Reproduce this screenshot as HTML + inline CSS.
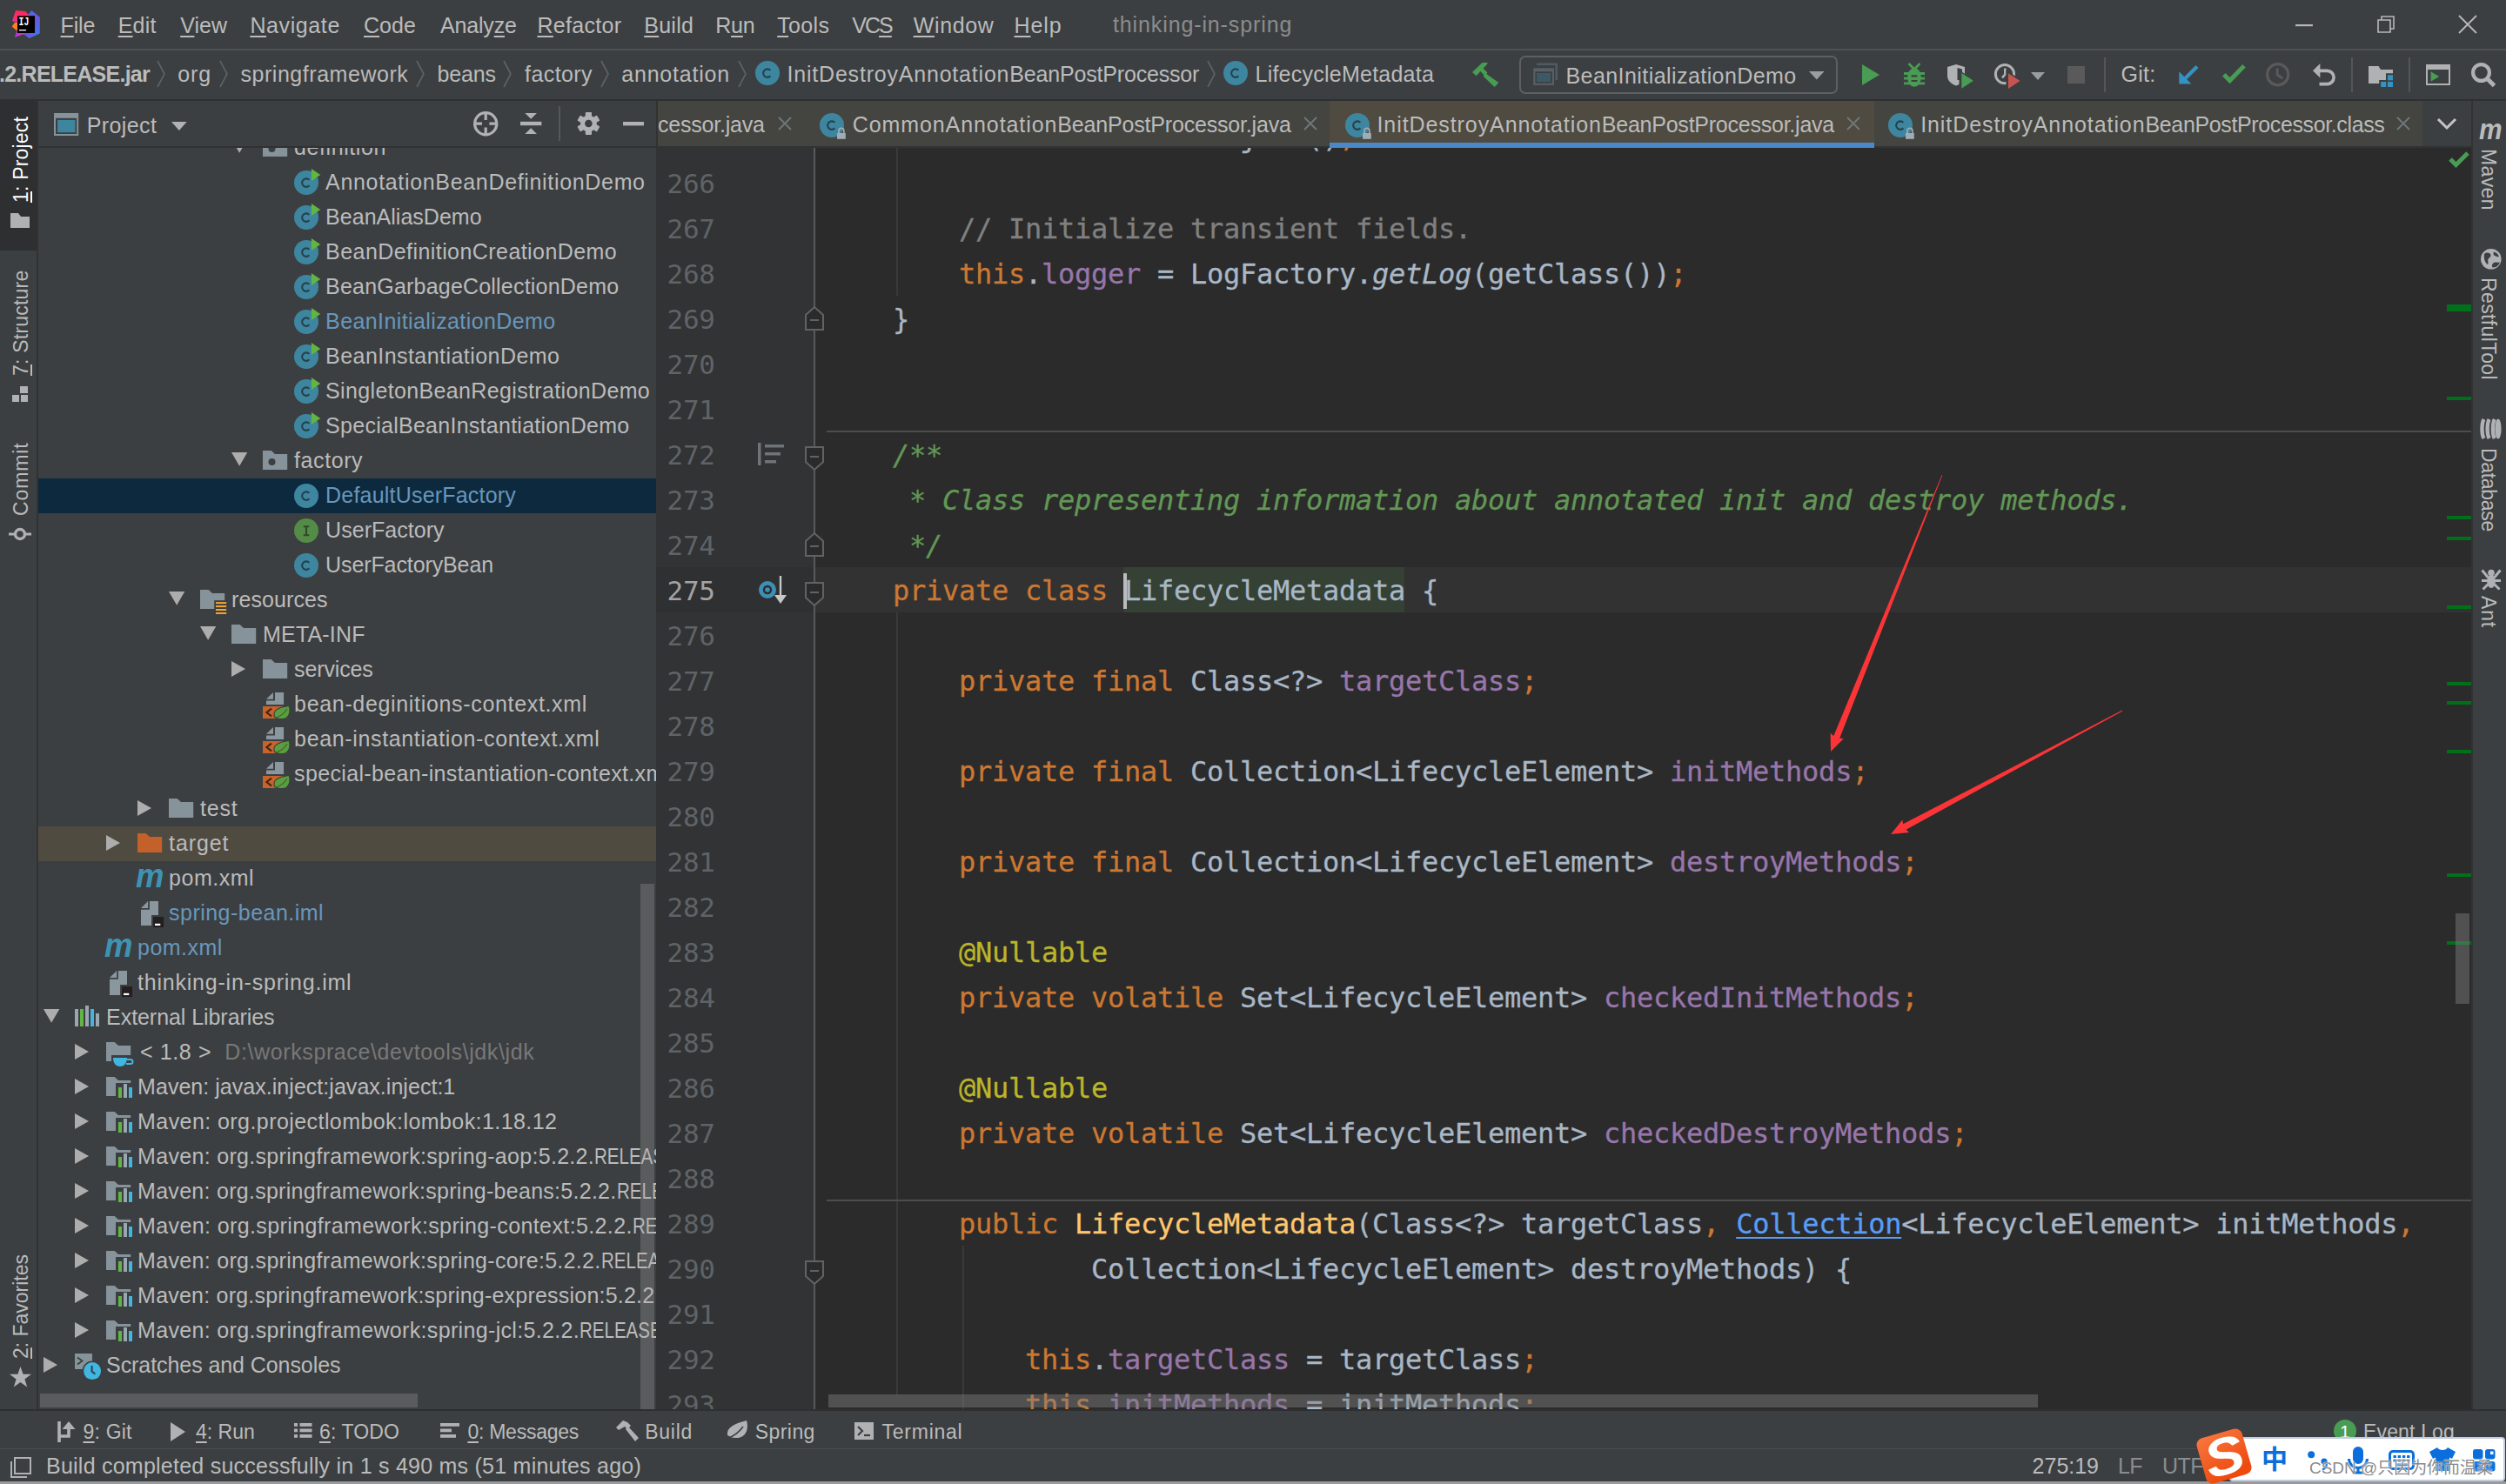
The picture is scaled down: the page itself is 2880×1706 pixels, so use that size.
<!DOCTYPE html>
<html lang="en"><head><meta charset="utf-8"><title>thinking-in-spring</title>
<style>
*{box-sizing:border-box;margin:0;padding:0}
html,body{width:2880px;height:1706px;overflow:hidden;background:#3c3f41}
body{position:relative;font-family:"Liberation Sans","Noto Sans CJK SC",sans-serif;color:#bbbbbb;font-size:25px}
.abs{position:absolute}
.t{position:absolute;white-space:nowrap;line-height:40px;height:40px}
u{text-decoration:underline;text-underline-offset:3px;text-decoration-thickness:2px}
.mono{font-family:"DejaVu Sans Mono","Liberation Mono",monospace}
svg{position:absolute;overflow:visible}
/* tree */
.row{position:absolute;left:44px;width:710px;height:40px}

.caps{display:inline-block;transform:scaleX(0.82);transform-origin:0 50%;letter-spacing:0}
.blue{color:#6897bb}
.gray{color:#787878}
/* code */
.ln{position:absolute;left:756px;width:2084px;height:52px}
.ln .num{position:absolute;left:10.5px;top:1px;line-height:52px;font-size:31px;letter-spacing:-0.26px;color:#606366;font-family:"DejaVu Sans Mono","Liberation Mono",monospace}
.ln .code{position:absolute;left:194px;top:1px;-webkit-text-stroke:0.3px;line-height:52px;font-size:32px;letter-spacing:-0.264px;color:#a9b7c6;white-space:pre;font-family:"DejaVu Sans Mono","Liberation Mono",monospace}
.k{color:#cc7832}.f{color:#9876aa}.a{color:#bbb529}.c{color:#808080}.d{color:#629755;font-style:italic}.m{color:#ffc66d}.i{font-style:italic}
.lnk{color:#589df6;text-decoration:underline;text-underline-offset:4px;text-decoration-thickness:2px}
.vt{position:absolute;white-space:nowrap;font-size:23px;line-height:30px;height:30px;transform-origin:0 0}

#m_File{letter-spacing:-0.148px}
#m_Edit{letter-spacing:0.23px}
#m_View{letter-spacing:0.016px}
#m_Navigate{letter-spacing:0.603px}
#m_Code{letter-spacing:0.055px}
#m_Analyze{letter-spacing:-0.179px}
#m_Refactor{letter-spacing:0.3px}
#m_Build{letter-spacing:0.281px}
#m_Run{letter-spacing:-0.154px}
#m_Tools{letter-spacing:0.347px}
#m_VCS{letter-spacing:-1.936px}
#m_Window{letter-spacing:0.662px}
#m_Help{letter-spacing:0.891px}
#title{letter-spacing:0.879px}
#c0{letter-spacing:-0.743px}
#c1{letter-spacing:0.957px}
#c2{letter-spacing:0.535px}
#c3{letter-spacing:-0.123px}
#c4{letter-spacing:0.411px}
#c5{letter-spacing:0.782px}
#c6a{letter-spacing:0.799px}
#c7{letter-spacing:0.24px}
#runcfg{letter-spacing:0.432px}
#gitlbl{letter-spacing:0.326px}
#projlbl{letter-spacing:0.384px}
#tab1{letter-spacing:-0.215px}
#tab2a{letter-spacing:0.915px}
#tab3a{letter-spacing:0.918px}
#tab4a{letter-spacing:0.918px}
#b1{letter-spacing:0.205px}
#b2{letter-spacing:0.003px}
#b3{letter-spacing:0.116px}
#b4{letter-spacing:-0.254px}
#b5{letter-spacing:0.709px}
#b6{letter-spacing:0.42px}
#b7{letter-spacing:0.76px}
#b8{letter-spacing:0.156px}
#s1{letter-spacing:0.241px}
#s2{letter-spacing:-0.01px}
#s3{letter-spacing:-0.594px}
#r1{letter-spacing:0.67px}
#r2{letter-spacing:0.019px}
#r3{letter-spacing:0.435px}
#r4{letter-spacing:0.202px}
#r5{letter-spacing:0.396px}
#r6{letter-spacing:0.448px}
#r7{letter-spacing:0.354px}
#r8{letter-spacing:0.268px}
#r9{letter-spacing:0.568px}
#r10{letter-spacing:0.197px}
#r11{letter-spacing:0.033px}
#r12{letter-spacing:-0.108px}
#r13{letter-spacing:0.071px}
#r14{letter-spacing:0.165px}
#r15{letter-spacing:-0.135px}
#r16{letter-spacing:0.667px}
#r17{letter-spacing:0.643px}
#r19{letter-spacing:0.752px}
#r20{letter-spacing:0.895px}
#r21{letter-spacing:0.52px}
#r22{letter-spacing:0.466px}
#r23{letter-spacing:0.463px}
#r24{letter-spacing:0.775px}
#r25{letter-spacing:-0.062px}
#r26{letter-spacing:0.613px}
#r27{letter-spacing:0.034px}
#r28{letter-spacing:0.43px}
#r35{letter-spacing:-0.076px}
#wm{letter-spacing:-0.031px}
#r18{letter-spacing:0.346px}
#r29{letter-spacing:0.31px}
#r30{letter-spacing:0.275px}
#r31{letter-spacing:0.385px}
#r32{letter-spacing:0.316px}
#r33{letter-spacing:0.213px}
#r34{letter-spacing:0.335px}
#vt1{letter-spacing:0.183px}
#vt2{letter-spacing:0.216px}
#vt3{letter-spacing:0.878px}
#vt4{letter-spacing:-0.014px}
#vr1{letter-spacing:0.391px}
#vr2{letter-spacing:0.384px}
#vr3{letter-spacing:-0.309px}
#vr4{letter-spacing:0.823px}
#c6b{letter-spacing:-0.18px}
#tab2b{letter-spacing:-0.177px}
#tab3b{letter-spacing:-0.236px}
#tab4b{letter-spacing:-0.369px}
#r0{letter-spacing:0.568px}
#s4{letter-spacing:-0.594px}
</style></head>
<body>
<div class="abs" style="left:0;top:116px;width:42px;height:1504px;background:#3c3f41"></div>
<div class="abs" style="left:0;top:116px;width:42px;height:172px;background:#2d2f30"></div>
<div class="abs" style="left:42px;top:116px;width:2px;height:1504px;background:#323232"></div>
<div class="vt" id="vt1" style="left:9px;top:233px;transform:rotate(-90deg);color:#ffffff"><u>1</u>: Project</div>
<svg style="left:12px;top:245px" width="22" height="17" viewBox="0 0 22 17"><path d="M0 0H9L12 4H22V17H0Z" fill="#afb1b3"/></svg>
<div class="vt" id="vt2" style="left:9px;top:432px;transform:rotate(-90deg);color:#bbbbbb"><u>7</u>: Structure</div>
<svg style="left:14px;top:444px" width="18" height="18" viewBox="0 0 18 18"><rect x="9" y="0" width="9" height="8" fill="#afb1b3"/><rect x="0" y="10" width="8" height="8" fill="#afb1b3"/><rect x="10" y="10" width="8" height="8" fill="#afb1b3"/></svg>
<div class="vt" id="vt3" style="left:9px;top:593px;transform:rotate(-90deg);color:#bbbbbb">Commit</div>
<svg style="left:10px;top:606px" width="26" height="16" viewBox="0 0 26 16"><circle cx="13" cy="8" r="5.5" fill="none" stroke="#afb1b3" stroke-width="3.4"/><path d="M0 8H7M19 8H26" stroke="#afb1b3" stroke-width="3"/></svg>
<div class="vt" id="vt4" style="left:9px;top:1562px;transform:rotate(-90deg);color:#bbbbbb"><u>2</u>: Favorites</div>
<svg style="left:11px;top:1571px" width="25" height="24" viewBox="0 0 25 24"><path d="M12.5 0L15.6 8.8H25L17.4 14.4L20.2 23.5L12.5 18L4.8 23.5L7.6 14.4L0 8.8H9.4Z" fill="#afb1b3"/></svg>
<div class="abs" style="left:44px;top:116px;width:712px;height:1504px;background:#3c3f41"></div>
<div class="abs" id="tree" style="left:44px;top:170px;width:710px;height:1450px;overflow:hidden">
<svg style="left:221.8px;top:-10.2px" width="18.3" height="15.8" viewBox="0 0 18.3 15.8"><path d="M0 0H18.3L9.15 15.8Z" fill="#adadad"/></svg>
<svg style="left:258px;top:-12px" width="28" height="22" viewBox="0 0 28 22"><path d="M0 0H9.7L14 4H28.2V22H0Z" fill="#87939a"/><circle cx="10.5" cy="13" r="4" fill="#3c3f41"/></svg>
<div class="lbl " style="position:absolute;left:294.1px;top:-21px;line-height:40px;white-space:nowrap;font-size:25px"><span id="r0">definition</span></div>
<svg style="left:294px;top:26px" width="28" height="28" viewBox="0 0 28 28"><circle cx="14" cy="14" r="14" fill="#3e86a0"/><path d="M17.4 17.3A4.75 4.75 0 1 1 17.4 10.9" fill="none" stroke="#24414d" stroke-width="2.1"/><path d="M19.9 -2V11.9L30.2 5Z" fill="#62b543"/></svg>
<div class="lbl " style="position:absolute;left:330.1px;top:19px;line-height:40px;white-space:nowrap;font-size:25px"><span id="r1">AnnotationBeanDefinitionDemo</span></div>
<svg style="left:294px;top:66px" width="28" height="28" viewBox="0 0 28 28"><circle cx="14" cy="14" r="14" fill="#3e86a0"/><path d="M17.4 17.3A4.75 4.75 0 1 1 17.4 10.9" fill="none" stroke="#24414d" stroke-width="2.1"/><path d="M19.9 -2V11.9L30.2 5Z" fill="#62b543"/></svg>
<div class="lbl " style="position:absolute;left:330.1px;top:59px;line-height:40px;white-space:nowrap;font-size:25px"><span id="r2">BeanAliasDemo</span></div>
<svg style="left:294px;top:106px" width="28" height="28" viewBox="0 0 28 28"><circle cx="14" cy="14" r="14" fill="#3e86a0"/><path d="M17.4 17.3A4.75 4.75 0 1 1 17.4 10.9" fill="none" stroke="#24414d" stroke-width="2.1"/><path d="M19.9 -2V11.9L30.2 5Z" fill="#62b543"/></svg>
<div class="lbl " style="position:absolute;left:330.1px;top:99px;line-height:40px;white-space:nowrap;font-size:25px"><span id="r3">BeanDefinitionCreationDemo</span></div>
<svg style="left:294px;top:146px" width="28" height="28" viewBox="0 0 28 28"><circle cx="14" cy="14" r="14" fill="#3e86a0"/><path d="M17.4 17.3A4.75 4.75 0 1 1 17.4 10.9" fill="none" stroke="#24414d" stroke-width="2.1"/><path d="M19.9 -2V11.9L30.2 5Z" fill="#62b543"/></svg>
<div class="lbl " style="position:absolute;left:330.1px;top:139px;line-height:40px;white-space:nowrap;font-size:25px"><span id="r4">BeanGarbageCollectionDemo</span></div>
<svg style="left:294px;top:186px" width="28" height="28" viewBox="0 0 28 28"><circle cx="14" cy="14" r="14" fill="#3e86a0"/><path d="M17.4 17.3A4.75 4.75 0 1 1 17.4 10.9" fill="none" stroke="#24414d" stroke-width="2.1"/><path d="M19.9 -2V11.9L30.2 5Z" fill="#62b543"/></svg>
<div class="lbl blue" style="position:absolute;left:330.1px;top:179px;line-height:40px;white-space:nowrap;font-size:25px"><span id="r5">BeanInitializationDemo</span></div>
<svg style="left:294px;top:226px" width="28" height="28" viewBox="0 0 28 28"><circle cx="14" cy="14" r="14" fill="#3e86a0"/><path d="M17.4 17.3A4.75 4.75 0 1 1 17.4 10.9" fill="none" stroke="#24414d" stroke-width="2.1"/><path d="M19.9 -2V11.9L30.2 5Z" fill="#62b543"/></svg>
<div class="lbl " style="position:absolute;left:330.1px;top:219px;line-height:40px;white-space:nowrap;font-size:25px"><span id="r6">BeanInstantiationDemo</span></div>
<svg style="left:294px;top:266px" width="28" height="28" viewBox="0 0 28 28"><circle cx="14" cy="14" r="14" fill="#3e86a0"/><path d="M17.4 17.3A4.75 4.75 0 1 1 17.4 10.9" fill="none" stroke="#24414d" stroke-width="2.1"/><path d="M19.9 -2V11.9L30.2 5Z" fill="#62b543"/></svg>
<div class="lbl " style="position:absolute;left:330.1px;top:259px;line-height:40px;white-space:nowrap;font-size:25px"><span id="r7">SingletonBeanRegistrationDemo</span></div>
<svg style="left:294px;top:306px" width="28" height="28" viewBox="0 0 28 28"><circle cx="14" cy="14" r="14" fill="#3e86a0"/><path d="M17.4 17.3A4.75 4.75 0 1 1 17.4 10.9" fill="none" stroke="#24414d" stroke-width="2.1"/><path d="M19.9 -2V11.9L30.2 5Z" fill="#62b543"/></svg>
<div class="lbl " style="position:absolute;left:330.1px;top:299px;line-height:40px;white-space:nowrap;font-size:25px"><span id="r8">SpecialBeanInstantiationDemo</span></div>
<svg style="left:221.8px;top:349.8px" width="18.3" height="15.8" viewBox="0 0 18.3 15.8"><path d="M0 0H18.3L9.15 15.8Z" fill="#adadad"/></svg>
<svg style="left:258px;top:348px" width="28" height="22" viewBox="0 0 28 22"><path d="M0 0H9.7L14 4H28.2V22H0Z" fill="#87939a"/><circle cx="10.5" cy="13" r="4" fill="#3c3f41"/></svg>
<div class="lbl " style="position:absolute;left:294.1px;top:339px;line-height:40px;white-space:nowrap;font-size:25px"><span id="r9">factory</span></div>
<div class="abs" style="left:0;top:380px;width:710px;height:40px;background:#0d293e"></div>
<svg style="left:294px;top:386px" width="28" height="28" viewBox="0 0 28 28"><circle cx="14" cy="14" r="14" fill="#3e86a0"/><path d="M17.4 17.3A4.75 4.75 0 1 1 17.4 10.9" fill="none" stroke="#24414d" stroke-width="2.1"/></svg>
<div class="lbl blue" style="position:absolute;left:330.1px;top:379px;line-height:40px;white-space:nowrap;font-size:25px"><span id="r10">DefaultUserFactory</span></div>
<svg style="left:294px;top:426px" width="28" height="28" viewBox="0 0 28 28"><circle cx="14" cy="14" r="14" fill="#548b46"/><path d="M10.8 9.2H17.2M10.8 19.2H17.2M14 9.2V19.2" fill="none" stroke="#2f4a26" stroke-width="2.1"/></svg>
<div class="lbl " style="position:absolute;left:330.1px;top:419px;line-height:40px;white-space:nowrap;font-size:25px"><span id="r11">UserFactory</span></div>
<svg style="left:294px;top:466px" width="28" height="28" viewBox="0 0 28 28"><circle cx="14" cy="14" r="14" fill="#3e86a0"/><path d="M17.4 17.3A4.75 4.75 0 1 1 17.4 10.9" fill="none" stroke="#24414d" stroke-width="2.1"/></svg>
<div class="lbl " style="position:absolute;left:330.1px;top:459px;line-height:40px;white-space:nowrap;font-size:25px"><span id="r12">UserFactoryBean</span></div>
<svg style="left:149.8px;top:509.8px" width="18.3" height="15.8" viewBox="0 0 18.3 15.8"><path d="M0 0H18.3L9.15 15.8Z" fill="#adadad"/></svg>
<svg style="left:186px;top:508px" width="30" height="26" viewBox="0 0 30 26"><path d="M0 0H9.7L14 4H28.2V22H0Z" fill="#87939a"/><rect x="16.2" y="12.2" width="15" height="17" fill="#3c3f41"/><rect x="18" y="14.1" width="12.2" height="2" fill="#f0a732"/><rect x="18" y="18.05" width="12.2" height="2" fill="#f0a732"/><rect x="18" y="22.0" width="12.2" height="2" fill="#f0a732"/><rect x="18" y="25.950000000000003" width="12.2" height="2" fill="#f0a732"/></svg>
<div class="lbl " style="position:absolute;left:222.1px;top:499px;line-height:40px;white-space:nowrap;font-size:25px"><span id="r13">resources</span></div>
<svg style="left:185.8px;top:549.8px" width="18.3" height="15.8" viewBox="0 0 18.3 15.8"><path d="M0 0H18.3L9.15 15.8Z" fill="#adadad"/></svg>
<svg style="left:222px;top:548px" width="28" height="22" viewBox="0 0 28 22"><path d="M0 0H9.7L14 4H28.2V22H0Z" fill="#87939a"/></svg>
<div class="lbl " style="position:absolute;left:258.1px;top:539px;line-height:40px;white-space:nowrap;font-size:25px"><span id="r14">META-INF</span></div>
<svg style="left:222px;top:590.3px" width="16" height="18" viewBox="0 0 16 18"><path d="M0 0V18L16 9Z" fill="#adadad"/></svg>
<svg style="left:258px;top:588px" width="28" height="22" viewBox="0 0 28 22"><path d="M0 0H9.7L14 4H28.2V22H0Z" fill="#87939a"/></svg>
<div class="lbl " style="position:absolute;left:294.1px;top:579px;line-height:40px;white-space:nowrap;font-size:25px"><span id="r15">services</span></div>
<svg style="left:258px;top:626px" width="32" height="31" viewBox="0 0 32 31"><path d="M4 7.7L12 0V7.7Z" fill="#8a979f"/><path d="M14 0H24.1V13.9H4V9.6H14Z" fill="#8a979f"/><rect x="0" y="16" width="28" height="14" fill="#c8632b"/><path d="M10 18.6L4.4 23L10 27.4" fill="none" stroke="#40240f" stroke-width="2"/><path d="M13.8 27.5C12.3 21 17 18.3 29.6 16C31.6 22 30 30.6 21 30C18 29.8 15 29 13.8 27.5Z" fill="#3c3f41" stroke="#3c3f41" stroke-width="2.4"/><path d="M13.8 27.5C12.3 21 17 18.3 29.6 16C31.6 22 30 30.6 21 30C18 29.8 15 29 13.8 27.5Z" fill="#5b9e3f"/><path d="M15 29C20 27.5 25 24 28 19" fill="none" stroke="#3d6b2a" stroke-width="1.3"/></svg>
<div class="lbl " style="position:absolute;left:294.1px;top:619px;line-height:40px;white-space:nowrap;font-size:25px"><span id="r16">bean-deginitions-context.xml</span></div>
<svg style="left:258px;top:666px" width="32" height="31" viewBox="0 0 32 31"><path d="M4 7.7L12 0V7.7Z" fill="#8a979f"/><path d="M14 0H24.1V13.9H4V9.6H14Z" fill="#8a979f"/><rect x="0" y="16" width="28" height="14" fill="#c8632b"/><path d="M10 18.6L4.4 23L10 27.4" fill="none" stroke="#40240f" stroke-width="2"/><path d="M13.8 27.5C12.3 21 17 18.3 29.6 16C31.6 22 30 30.6 21 30C18 29.8 15 29 13.8 27.5Z" fill="#3c3f41" stroke="#3c3f41" stroke-width="2.4"/><path d="M13.8 27.5C12.3 21 17 18.3 29.6 16C31.6 22 30 30.6 21 30C18 29.8 15 29 13.8 27.5Z" fill="#5b9e3f"/><path d="M15 29C20 27.5 25 24 28 19" fill="none" stroke="#3d6b2a" stroke-width="1.3"/></svg>
<div class="lbl " style="position:absolute;left:294.1px;top:659px;line-height:40px;white-space:nowrap;font-size:25px"><span id="r17">bean-instantiation-context.xml</span></div>
<svg style="left:258px;top:706px" width="32" height="31" viewBox="0 0 32 31"><path d="M4 7.7L12 0V7.7Z" fill="#8a979f"/><path d="M14 0H24.1V13.9H4V9.6H14Z" fill="#8a979f"/><rect x="0" y="16" width="28" height="14" fill="#c8632b"/><path d="M10 18.6L4.4 23L10 27.4" fill="none" stroke="#40240f" stroke-width="2"/><path d="M13.8 27.5C12.3 21 17 18.3 29.6 16C31.6 22 30 30.6 21 30C18 29.8 15 29 13.8 27.5Z" fill="#3c3f41" stroke="#3c3f41" stroke-width="2.4"/><path d="M13.8 27.5C12.3 21 17 18.3 29.6 16C31.6 22 30 30.6 21 30C18 29.8 15 29 13.8 27.5Z" fill="#5b9e3f"/><path d="M15 29C20 27.5 25 24 28 19" fill="none" stroke="#3d6b2a" stroke-width="1.3"/></svg>
<div class="lbl " style="position:absolute;left:294.1px;top:699px;line-height:40px;white-space:nowrap;font-size:25px"><span id="r18">special-bean-instantiation-context.xml</span></div>
<svg style="left:114px;top:750.3px" width="16" height="18" viewBox="0 0 16 18"><path d="M0 0V18L16 9Z" fill="#adadad"/></svg>
<svg style="left:150px;top:748px" width="28" height="22" viewBox="0 0 28 22"><path d="M0 0H9.7L14 4H28.2V22H0Z" fill="#87939a"/></svg>
<div class="lbl " style="position:absolute;left:186.1px;top:739px;line-height:40px;white-space:nowrap;font-size:25px"><span id="r19">test</span></div>
<div class="abs" style="left:0;top:780px;width:710px;height:40px;background:#4f4b41"></div>
<svg style="left:78px;top:790.3px" width="16" height="18" viewBox="0 0 16 18"><path d="M0 0V18L16 9Z" fill="#adadad"/></svg>
<svg style="left:114px;top:788px" width="28" height="22" viewBox="0 0 28 22"><path d="M0 0H9.7L14 4H28.2V22H0Z" fill="#c4602a"/></svg>
<div class="lbl " style="position:absolute;left:150.1px;top:779px;line-height:40px;white-space:nowrap;font-size:25px"><span id="r20">target</span></div>
<div class="abs" style="left:111.8px;top:818px;font:italic bold 38px 'Liberation Sans',sans-serif;color:#3e93b3;line-height:38px;transform:scaleX(0.96);transform-origin:0 0">m</div>
<div class="lbl " style="position:absolute;left:150.1px;top:819px;line-height:40px;white-space:nowrap;font-size:25px"><span id="r21">pom.xml</span></div>
<svg style="left:117.9px;top:865.9px" width="27" height="31" viewBox="0 0 27 31"><path d="M0 7.9L8.1 0V7.9Z" fill="#8a979f"/><path d="M9.9 0H20V15.9H12.1V28H0V9.8H9.9Z" fill="#8a979f"/><rect x="14.1" y="18.1" width="12" height="12" fill="#231f20"/><rect x="16" y="25.8" width="6.3" height="2.2" fill="#ffffff"/></svg>
<div class="lbl blue" style="position:absolute;left:150.1px;top:859px;line-height:40px;white-space:nowrap;font-size:25px"><span id="r22">spring-bean.iml</span></div>
<div class="abs" style="left:75.8px;top:898px;font:italic bold 38px 'Liberation Sans',sans-serif;color:#3e93b3;line-height:38px;transform:scaleX(0.96);transform-origin:0 0">m</div>
<div class="lbl blue" style="position:absolute;left:114.1px;top:899px;line-height:40px;white-space:nowrap;font-size:25px"><span id="r23">pom.xml</span></div>
<svg style="left:81.9px;top:945.9px" width="27" height="31" viewBox="0 0 27 31"><path d="M0 7.9L8.1 0V7.9Z" fill="#8a979f"/><path d="M9.9 0H20V15.9H12.1V28H0V9.8H9.9Z" fill="#8a979f"/><rect x="14.1" y="18.1" width="12" height="12" fill="#231f20"/><rect x="16" y="25.8" width="6.3" height="2.2" fill="#ffffff"/></svg>
<div class="lbl " style="position:absolute;left:114.1px;top:939px;line-height:40px;white-space:nowrap;font-size:25px"><span id="r24">thinking-in-spring.iml</span></div>
<svg style="left:5.799999999999997px;top:989.8px" width="18.3" height="15.8" viewBox="0 0 18.3 15.8"><path d="M0 0H18.3L9.15 15.8Z" fill="#adadad"/></svg>
<svg style="left:42px;top:986px" width="28" height="24" viewBox="0 0 28 24"><rect x="0" y="4" width="4" height="20" fill="#9aa7b0"/><rect x="6" y="4" width="4" height="20" fill="#62b543"/><rect x="12" y="0" width="4" height="24" fill="#9aa7b0"/><rect x="18" y="4" width="4" height="20" fill="#40b6e0"/><rect x="24" y="9" width="4" height="15" fill="#9aa7b0"/></svg>
<div class="lbl " style="position:absolute;left:78.1px;top:979px;line-height:40px;white-space:nowrap;font-size:25px"><span id="r25">External Libraries</span></div>
<svg style="left:42px;top:1030.3px" width="16" height="18" viewBox="0 0 16 18"><path d="M0 0V18L16 9Z" fill="#adadad"/></svg>
<svg style="left:78px;top:1028px" width="31" height="29" viewBox="0 0 31 29"><path d="M0 0H9.7L14 4H28.2V22H0Z" fill="#87939a"/><rect x="6" y="15" width="24" height="14" fill="#3c3f41"/><path d="M8 18H24C24 24 21 28 16 28C11 28 8 24 8 18Z" fill="#40b6e0"/><path d="M24 20H28A2 2 0 0 1 28 25H23" fill="none" stroke="#40b6e0" stroke-width="2"/></svg>
<div class="lbl " style="position:absolute;left:117.0px;top:1019px;line-height:40px;white-space:nowrap;font-size:25px"><span id="r26">&lt; 1.8 &gt;&nbsp; <span class="gray">D:\worksprace\devtools\jdk\jdk</span></span></div>
<svg style="left:42px;top:1070.3px" width="16" height="18" viewBox="0 0 16 18"><path d="M0 0V18L16 9Z" fill="#adadad"/></svg>
<svg style="left:78px;top:1068px" width="30" height="25" viewBox="0 0 30 25"><path d="M0 0H9.7L14 4H28.2V22H0Z" fill="#87939a"/><rect x="11" y="7" width="19" height="18" fill="#3c3f41"/><rect x="14" y="12" width="4" height="12" fill="#62b543"/><rect x="20" y="8" width="4" height="16" fill="#9aa7b0"/><rect x="26" y="12" width="4" height="12" fill="#40b6e0"/></svg>
<div class="lbl " style="position:absolute;left:114.1px;top:1059px;line-height:40px;white-space:nowrap;font-size:25px"><span id="r27">Maven: javax.inject:javax.inject:1</span></div>
<svg style="left:42px;top:1110.3px" width="16" height="18" viewBox="0 0 16 18"><path d="M0 0V18L16 9Z" fill="#adadad"/></svg>
<svg style="left:78px;top:1108px" width="30" height="25" viewBox="0 0 30 25"><path d="M0 0H9.7L14 4H28.2V22H0Z" fill="#87939a"/><rect x="11" y="7" width="19" height="18" fill="#3c3f41"/><rect x="14" y="12" width="4" height="12" fill="#62b543"/><rect x="20" y="8" width="4" height="16" fill="#9aa7b0"/><rect x="26" y="12" width="4" height="12" fill="#40b6e0"/></svg>
<div class="lbl " style="position:absolute;left:114.1px;top:1099px;line-height:40px;white-space:nowrap;font-size:25px"><span id="r28">Maven: org.projectlombok:lombok:1.18.12</span></div>
<svg style="left:42px;top:1150.3px" width="16" height="18" viewBox="0 0 16 18"><path d="M0 0V18L16 9Z" fill="#adadad"/></svg>
<svg style="left:78px;top:1148px" width="30" height="25" viewBox="0 0 30 25"><path d="M0 0H9.7L14 4H28.2V22H0Z" fill="#87939a"/><rect x="11" y="7" width="19" height="18" fill="#3c3f41"/><rect x="14" y="12" width="4" height="12" fill="#62b543"/><rect x="20" y="8" width="4" height="16" fill="#9aa7b0"/><rect x="26" y="12" width="4" height="12" fill="#40b6e0"/></svg>
<div class="lbl " style="position:absolute;left:114.1px;top:1139px;line-height:40px;white-space:nowrap;font-size:25px"><span id="r29">Maven: org.springframework:spring-aop:5.2.2.</span><span class="caps">RELEASE</span></div>
<svg style="left:42px;top:1190.3px" width="16" height="18" viewBox="0 0 16 18"><path d="M0 0V18L16 9Z" fill="#adadad"/></svg>
<svg style="left:78px;top:1188px" width="30" height="25" viewBox="0 0 30 25"><path d="M0 0H9.7L14 4H28.2V22H0Z" fill="#87939a"/><rect x="11" y="7" width="19" height="18" fill="#3c3f41"/><rect x="14" y="12" width="4" height="12" fill="#62b543"/><rect x="20" y="8" width="4" height="16" fill="#9aa7b0"/><rect x="26" y="12" width="4" height="12" fill="#40b6e0"/></svg>
<div class="lbl " style="position:absolute;left:114.1px;top:1179px;line-height:40px;white-space:nowrap;font-size:25px"><span id="r30">Maven: org.springframework:spring-beans:5.2.2.</span><span class="caps">RELEASE</span></div>
<svg style="left:42px;top:1230.3px" width="16" height="18" viewBox="0 0 16 18"><path d="M0 0V18L16 9Z" fill="#adadad"/></svg>
<svg style="left:78px;top:1228px" width="30" height="25" viewBox="0 0 30 25"><path d="M0 0H9.7L14 4H28.2V22H0Z" fill="#87939a"/><rect x="11" y="7" width="19" height="18" fill="#3c3f41"/><rect x="14" y="12" width="4" height="12" fill="#62b543"/><rect x="20" y="8" width="4" height="16" fill="#9aa7b0"/><rect x="26" y="12" width="4" height="12" fill="#40b6e0"/></svg>
<div class="lbl " style="position:absolute;left:114.1px;top:1219px;line-height:40px;white-space:nowrap;font-size:25px"><span id="r31">Maven: org.springframework:spring-context:5.2.2.</span><span class="caps">RELEASE</span></div>
<svg style="left:42px;top:1270.3px" width="16" height="18" viewBox="0 0 16 18"><path d="M0 0V18L16 9Z" fill="#adadad"/></svg>
<svg style="left:78px;top:1268px" width="30" height="25" viewBox="0 0 30 25"><path d="M0 0H9.7L14 4H28.2V22H0Z" fill="#87939a"/><rect x="11" y="7" width="19" height="18" fill="#3c3f41"/><rect x="14" y="12" width="4" height="12" fill="#62b543"/><rect x="20" y="8" width="4" height="16" fill="#9aa7b0"/><rect x="26" y="12" width="4" height="12" fill="#40b6e0"/></svg>
<div class="lbl " style="position:absolute;left:114.1px;top:1259px;line-height:40px;white-space:nowrap;font-size:25px"><span id="r32">Maven: org.springframework:spring-core:5.2.2.</span><span class="caps">RELEASE</span></div>
<svg style="left:42px;top:1310.3px" width="16" height="18" viewBox="0 0 16 18"><path d="M0 0V18L16 9Z" fill="#adadad"/></svg>
<svg style="left:78px;top:1308px" width="30" height="25" viewBox="0 0 30 25"><path d="M0 0H9.7L14 4H28.2V22H0Z" fill="#87939a"/><rect x="11" y="7" width="19" height="18" fill="#3c3f41"/><rect x="14" y="12" width="4" height="12" fill="#62b543"/><rect x="20" y="8" width="4" height="16" fill="#9aa7b0"/><rect x="26" y="12" width="4" height="12" fill="#40b6e0"/></svg>
<div class="lbl " style="position:absolute;left:114.1px;top:1299px;line-height:40px;white-space:nowrap;font-size:25px"><span id="r33">Maven: org.springframework:spring-expression:5.2.2.</span><span class="caps">RELEASE</span></div>
<svg style="left:42px;top:1350.3px" width="16" height="18" viewBox="0 0 16 18"><path d="M0 0V18L16 9Z" fill="#adadad"/></svg>
<svg style="left:78px;top:1348px" width="30" height="25" viewBox="0 0 30 25"><path d="M0 0H9.7L14 4H28.2V22H0Z" fill="#87939a"/><rect x="11" y="7" width="19" height="18" fill="#3c3f41"/><rect x="14" y="12" width="4" height="12" fill="#62b543"/><rect x="20" y="8" width="4" height="16" fill="#9aa7b0"/><rect x="26" y="12" width="4" height="12" fill="#40b6e0"/></svg>
<div class="lbl " style="position:absolute;left:114.1px;top:1339px;line-height:40px;white-space:nowrap;font-size:25px"><span id="r34">Maven: org.springframework:spring-jcl:5.2.2.</span><span class="caps">RELEASE</span></div>
<svg style="left:6px;top:1390.3px" width="16" height="18" viewBox="0 0 16 18"><path d="M0 0V18L16 9Z" fill="#adadad"/></svg>
<svg style="left:42px;top:1386px" width="32" height="32" viewBox="0 0 32 32"><path d="M0 0H20V18H0Z" fill="#87939a"/><path d="M3 4.5L8.5 8.5L3 12.5" fill="none" stroke="#3c3f41" stroke-width="1.8"/><circle cx="20.1" cy="20.1" r="11.6" fill="#3c3f41"/><circle cx="20.1" cy="20.1" r="10" fill="#40b6e0"/><path d="M19.6 14V20.6L23.3 23.6" fill="none" stroke="#2b4a5a" stroke-width="2.2"/></svg>
<div class="lbl " style="position:absolute;left:78.1px;top:1379px;line-height:40px;white-space:nowrap;font-size:25px"><span id="r35">Scratches and Consoles</span></div>
</div>
<div class="abs" style="left:736px;top:1016px;width:16px;height:604px;background:rgba(166,166,166,0.28)"></div>
<div class="abs" style="left:46px;top:1602px;width:434px;height:16px;background:rgba(166,166,166,0.28)"></div>
<div class="abs" style="left:754px;top:116px;width:2px;height:54px;background:#323232"></div>
<div class="abs" style="left:754px;top:170px;width:2px;height:1450px;background:#313335"></div>
<div class="abs" style="left:754px;top:652px;width:2px;height:52px;background:#2f3032"></div>
<div class="abs" style="left:44px;top:116px;width:710px;height:52px;background:#3c3f41"></div>
<div class="abs" style="left:44px;top:168px;width:710px;height:2px;background:#2f3133"></div>
<svg style="left:61.8px;top:130px" width="28.2" height="26" viewBox="0 0 28.2 26"><rect width="28.2" height="26" fill="#87939a"/><rect x="2" y="5.8" width="24.2" height="18.2" fill="#3c3f41"/><rect x="4.1" y="7.9" width="20.4" height="14.3" fill="#3e86a0"/></svg>
<div class="t" id="projlbl" style="left:99.8px;top:124px;font-size:25px">Project</div>
<svg style="left:197.3px;top:140px" width="17.7" height="10" viewBox="0 0 17.7 10"><path d="M0 0H17.7L8.85 10Z" fill="#afb1b3"/></svg>
<svg style="left:543.7px;top:127.8px" width="28.4" height="28.4" viewBox="0 0 28.4 28.4"><circle cx="14.2" cy="14.2" r="12.6" fill="none" stroke="#afb1b3" stroke-width="3.2"/><path d="M14.2 2V10M14.2 18.4V26.4M2 14.2H10M18.4 14.2H26.4" stroke="#afb1b3" stroke-width="3.2"/></svg>
<svg style="left:598px;top:130px" width="24.4" height="24" viewBox="0 0 24.4 24"><path d="M0 12H24.4" stroke="#afb1b3" stroke-width="4.4"/><path d="M5.3 0H19L12.2 6.7Z M5.3 24H19L12.2 17.3Z" fill="#afb1b3"/></svg>
<div class="abs" style="left:642px;top:122px;width:2px;height:40px;background:#555759"></div>
<svg style="left:663.7px;top:129px" width="24.8" height="26" viewBox="0 0 24.8 26"><g transform="translate(12.4,13)"><rect x="-3.6" y="-13" width="7.2" height="26" rx="1" fill="#afb1b3" transform="rotate(0)"/><rect x="-3.6" y="-13" width="7.2" height="26" rx="1" fill="#afb1b3" transform="rotate(60)"/><rect x="-3.6" y="-13" width="7.2" height="26" rx="1" fill="#afb1b3" transform="rotate(120)"/><circle r="9.4" fill="#afb1b3"/><circle r="4.3" fill="#3c3f41"/></g></svg>
<svg style="left:716px;top:139.8px" width="24" height="4.4" viewBox="0 0 24 4.4"><rect width="24" height="4.4" fill="#afb1b3"/></svg>
<div class="abs" style="left:756px;top:116px;width:2084px;height:54px;background:#3c3f41"></div>
<div class="abs" style="left:756px;top:116px;width:772px;height:52px;background:#444540"></div>
<div class="abs" style="left:1528px;top:116px;width:626px;height:54px;background:#4f4b41"></div>
<div class="abs" style="left:2154px;top:116px;width:630px;height:52px;background:#444540"></div>
<div class="abs" style="left:756px;top:168px;width:2084px;height:2px;background:#303234"></div>
<div class="abs" style="left:1528px;top:164px;width:626px;height:6px;background:#4a88c7"></div>
<div class="t" id="tab1" style="left:756px;top:123px;font-size:25px">cessor.java</div>
<svg style="left:894px;top:134px" width="16" height="16" viewBox="0 0 16 16"><path d="M1 1L15 15M15 1L1 15" stroke="#70777a" stroke-width="1.8"/></svg>
<svg style="left:942px;top:130px" width="28" height="28" viewBox="0 0 28 28"><circle cx="14" cy="14" r="14" fill="#3e86a0"/><path d="M17.4 17.3A4.75 4.75 0 1 1 17.4 10.9" fill="none" stroke="#24414d" stroke-width="2.1"/><rect x="20" y="23" width="9.8" height="6.8" fill="#a0acb4"/><path d="M22 23.5V20.3A2.9 2.9 0 0 1 27.8 20.3V23.5" fill="none" stroke="#a0acb4" stroke-width="1.7"/></svg>
<div class="t" style="left:979.7px;top:123px;font-size:25px"><span id="tab2a">CommonAnnotation</span><span id="tab2b">BeanPostProcessor.java</span></div>
<svg style="left:1498px;top:134px" width="16" height="16" viewBox="0 0 16 16"><path d="M1 1L15 15M15 1L1 15" stroke="#70777a" stroke-width="1.8"/></svg>
<svg style="left:1546.3px;top:130px" width="28" height="28" viewBox="0 0 28 28"><circle cx="14" cy="14" r="14" fill="#3e86a0"/><path d="M17.4 17.3A4.75 4.75 0 1 1 17.4 10.9" fill="none" stroke="#24414d" stroke-width="2.1"/><rect x="20" y="23" width="9.8" height="6.8" fill="#a0acb4"/><path d="M22 23.5V20.3A2.9 2.9 0 0 1 27.8 20.3V23.5" fill="none" stroke="#a0acb4" stroke-width="1.7"/></svg>
<div class="t" style="left:1582.5px;top:123px;font-size:25px"><span id="tab3a">InitDestroyAnnotation</span><span id="tab3b">BeanPostProcessor.java</span></div>
<svg style="left:2122px;top:134px" width="16" height="16" viewBox="0 0 16 16"><path d="M1 1L15 15M15 1L1 15" stroke="#70777a" stroke-width="1.8"/></svg>
<svg style="left:2170.3px;top:130px" width="28" height="28" viewBox="0 0 28 28"><circle cx="14" cy="14" r="14" fill="#3e86a0"/><path d="M17.4 17.3A4.75 4.75 0 1 1 17.4 10.9" fill="none" stroke="#24414d" stroke-width="2.1"/><rect x="20" y="23" width="9.8" height="6.8" fill="#a0acb4"/><path d="M22 23.5V20.3A2.9 2.9 0 0 1 27.8 20.3V23.5" fill="none" stroke="#a0acb4" stroke-width="1.7"/></svg>
<div class="t" style="left:2207.2px;top:123px;font-size:25px"><span id="tab4a">InitDestroyAnnotation</span><span id="tab4b">BeanPostProcessor.class</span></div>
<svg style="left:2754px;top:134px" width="16" height="16" viewBox="0 0 16 16"><path d="M1 1L15 15M15 1L1 15" stroke="#70777a" stroke-width="1.8"/></svg>
<svg style="left:2801px;top:136px" width="22" height="12" viewBox="0 0 22 12"><path d="M1 1L11 11L21 1" fill="none" stroke="#c4c4c4" stroke-width="3"/></svg>
<div class="abs" id="ed" style="left:756px;top:170px;width:2084px;height:1450px;background:#2b2b2b;overflow:hidden">
<div class="abs" style="left:0;top:0;width:180px;height:1450px;background:#313335"></div>
<div class="abs" style="left:0;top:482px;width:181px;height:52px;background:#2f3032"></div>
<div class="abs" style="left:181px;top:482px;width:1903px;height:52px;background:#323232"></div>
<div class="abs" style="left:535px;top:482px;width:323px;height:52px;background:#344134"></div>
<div class="abs" style="left:179px;top:0;width:2px;height:1450px;background:#5a5a5a"></div>
<div class="abs" style="left:274px;top:0;width:2px;height:170px;background:#393939"></div>
<div class="abs" style="left:274px;top:534px;width:2px;height:900px;background:#393939"></div>
<div class="abs" style="left:350px;top:1262px;width:2px;height:400px;background:#393939"></div>
<div class="abs" style="left:194px;top:325px;width:1890px;height:2px;background:#4d4d4d"></div>
<div class="abs" style="left:194px;top:1209px;width:1890px;height:2px;background:#4d4d4d"></div>
<div class="ln" style="left:0;top:-39.5px"><span class="num" style="">265</span><span class="code" id="L265">        ois.defaultReadObject()<span class="k">;</span></span></div>
<div class="ln" style="left:0;top:14px"><span class="num" style="">266</span><span class="code" id="L266"></span></div>
<div class="ln" style="left:0;top:66px"><span class="num" style="">267</span><span class="code" id="L267">        <span class="c">// Initialize transient fields.</span></span></div>
<div class="ln" style="left:0;top:118px"><span class="num" style="">268</span><span class="code" id="L268">        <span class="k">this</span>.<span class="f">logger</span> = LogFactory.<span class="i">getLog</span>(getClass())<span class="k">;</span></span></div>
<div class="ln" style="left:0;top:170px"><span class="num" style="">269</span><span class="code" id="L269">    }</span></div>
<div class="ln" style="left:0;top:222px"><span class="num" style="">270</span><span class="code" id="L270"></span></div>
<div class="ln" style="left:0;top:274px"><span class="num" style="">271</span><span class="code" id="L271"></span></div>
<div class="ln" style="left:0;top:326px"><span class="num" style="">272</span><span class="code" id="L272">    <span class="d">/**</span></span></div>
<div class="ln" style="left:0;top:378px"><span class="num" style="">273</span><span class="code" id="L273">    <span class="d"> * Class representing information about annotated init and destroy methods.</span></span></div>
<div class="ln" style="left:0;top:430px"><span class="num" style="">274</span><span class="code" id="L274">    <span class="d"> */</span></span></div>
<div class="ln" style="left:0;top:482px"><span class="num" style="color:#a4a3a3;">275</span><span class="code" id="L275">    <span class="k">private class </span>LifecycleMetadata {</span></div>
<div class="ln" style="left:0;top:534px"><span class="num" style="">276</span><span class="code" id="L276"></span></div>
<div class="ln" style="left:0;top:586px"><span class="num" style="">277</span><span class="code" id="L277">        <span class="k">private final </span>Class&lt;?&gt; <span class="f">targetClass</span><span class="k">;</span></span></div>
<div class="ln" style="left:0;top:638px"><span class="num" style="">278</span><span class="code" id="L278"></span></div>
<div class="ln" style="left:0;top:690px"><span class="num" style="">279</span><span class="code" id="L279">        <span class="k">private final </span>Collection&lt;LifecycleElement&gt; <span class="f">initMethods</span><span class="k">;</span></span></div>
<div class="ln" style="left:0;top:742px"><span class="num" style="">280</span><span class="code" id="L280"></span></div>
<div class="ln" style="left:0;top:794px"><span class="num" style="">281</span><span class="code" id="L281">        <span class="k">private final </span>Collection&lt;LifecycleElement&gt; <span class="f">destroyMethods</span><span class="k">;</span></span></div>
<div class="ln" style="left:0;top:846px"><span class="num" style="">282</span><span class="code" id="L282"></span></div>
<div class="ln" style="left:0;top:898px"><span class="num" style="">283</span><span class="code" id="L283">        <span class="a">@Nullable</span></span></div>
<div class="ln" style="left:0;top:950px"><span class="num" style="">284</span><span class="code" id="L284">        <span class="k">private volatile </span>Set&lt;LifecycleElement&gt; <span class="f">checkedInitMethods</span><span class="k">;</span></span></div>
<div class="ln" style="left:0;top:1002px"><span class="num" style="">285</span><span class="code" id="L285"></span></div>
<div class="ln" style="left:0;top:1054px"><span class="num" style="">286</span><span class="code" id="L286">        <span class="a">@Nullable</span></span></div>
<div class="ln" style="left:0;top:1106px"><span class="num" style="">287</span><span class="code" id="L287">        <span class="k">private volatile </span>Set&lt;LifecycleElement&gt; <span class="f">checkedDestroyMethods</span><span class="k">;</span></span></div>
<div class="ln" style="left:0;top:1158px"><span class="num" style="">288</span><span class="code" id="L288"></span></div>
<div class="ln" style="left:0;top:1210px"><span class="num" style="">289</span><span class="code" id="L289">        <span class="k">public </span><span class="m">LifecycleMetadata</span>(Class&lt;?&gt; targetClass<span class="k">,</span> <span class="lnk">Collection</span>&lt;LifecycleElement&gt; initMethods<span class="k">,</span></span></div>
<div class="ln" style="left:0;top:1262px"><span class="num" style="">290</span><span class="code" id="L290">                Collection&lt;LifecycleElement&gt; destroyMethods) {</span></div>
<div class="ln" style="left:0;top:1314px"><span class="num" style="">291</span><span class="code" id="L291"></span></div>
<div class="ln" style="left:0;top:1366px"><span class="num" style="">292</span><span class="code" id="L292">            <span class="k">this</span>.<span class="f">targetClass</span> = targetClass<span class="k">;</span></span></div>
<div class="ln" style="left:0;top:1418px"><span class="num" style="">293</span><span class="code" id="L293">            <span class="k">this</span>.<span class="f">initMethods</span> = initMethods<span class="k">;</span></span></div>
<div class="abs" style="left:535px;top:489px;width:4px;height:41px;background:#bbbbbb"></div>
<svg style="left:169px;top:182px" width="22" height="28" viewBox="0 0 22 28"><path d="M1 10L11 1L21 10V27H1Z" fill="#2b2b2b" stroke="#606366" stroke-width="2"/><path d="M6 16H16" stroke="#606366" stroke-width="2"/></svg>
<svg style="left:169px;top:343px" width="22" height="28" viewBox="0 0 22 28"><path d="M1 1H21V18L11 27L1 18Z" fill="#2b2b2b" stroke="#606366" stroke-width="2"/><path d="M6 12H16" stroke="#606366" stroke-width="2"/></svg>
<svg style="left:169px;top:442px" width="22" height="28" viewBox="0 0 22 28"><path d="M1 10L11 1L21 10V27H1Z" fill="#2b2b2b" stroke="#606366" stroke-width="2"/><path d="M6 16H16" stroke="#606366" stroke-width="2"/></svg>
<svg style="left:169px;top:499px" width="22" height="28" viewBox="0 0 22 28"><path d="M1 1H21V18L11 27L1 18Z" fill="#2b2b2b" stroke="#606366" stroke-width="2"/><path d="M6 12H16" stroke="#606366" stroke-width="2"/></svg>
<svg style="left:169px;top:1279px" width="22" height="28" viewBox="0 0 22 28"><path d="M1 1H21V18L11 27L1 18Z" fill="#2b2b2b" stroke="#606366" stroke-width="2"/><path d="M6 12H16" stroke="#606366" stroke-width="2"/></svg>
<svg style="left:115px;top:339px" width="30" height="26" viewBox="0 0 30 26"><rect x="0" y="0" width="3.5" height="26" fill="#6e7478"/><rect x="8" y="2" width="22" height="3.5" fill="#6e7478"/><rect x="8" y="11" width="18" height="3.5" fill="#6e7478"/><rect x="8" y="20" width="13" height="3.5" fill="#6e7478"/></svg>
<svg style="left:116px;top:490px" width="32" height="36" viewBox="0 0 32 36"><circle cx="10" cy="18" r="10" fill="#3e8fb5"/><circle cx="10" cy="18" r="4" fill="none" stroke="#2b2b2b" stroke-width="2.4"/><path d="M25 2V28" stroke="#c8c8c8" stroke-width="2.4"/><path d="M18 24H32L25 34Z" fill="#c8c8c8"/></svg>
<svg style="left:2058px;top:4px" width="24" height="18" viewBox="0 0 24 18"><path d="M2 9L8.5 15.5L22 2" fill="none" stroke="#499c54" stroke-width="5"/></svg>
<div class="abs" style="left:2056px;top:180px;width:28px;height:8px;background:#00701a"></div>
<div class="abs" style="left:2056px;top:286px;width:28px;height:4px;background:#00701a"></div>
<div class="abs" style="left:2056px;top:423px;width:28px;height:4px;background:#00701a"></div>
<div class="abs" style="left:2056px;top:447px;width:28px;height:4px;background:#00701a"></div>
<div class="abs" style="left:2056px;top:526px;width:28px;height:4px;background:#00701a"></div>
<div class="abs" style="left:2056px;top:614px;width:28px;height:4px;background:#00701a"></div>
<div class="abs" style="left:2056px;top:636px;width:28px;height:4px;background:#00701a"></div>
<div class="abs" style="left:2056px;top:692px;width:28px;height:4px;background:#00701a"></div>
<div class="abs" style="left:2056px;top:834px;width:28px;height:4px;background:#00701a"></div>
<div class="abs" style="left:2056px;top:912px;width:28px;height:4px;background:#00701a"></div>
<div class="abs" style="left:2066px;top:880px;width:16px;height:104px;background:rgba(128,128,128,0.45)"></div>
<div class="abs" style="left:196px;top:1433px;width:1390px;height:15px;background:rgba(128,128,128,0.45)"></div>
</div>
<div class="abs" style="left:2840px;top:116px;width:2px;height:1504px;background:#323232"></div>
<div class="abs" style="left:2842px;top:116px;width:38px;height:1504px;background:#3c3f41"></div>
<div class="abs" style="left:2848.5px;top:130px;font:italic bold 34px 'Liberation Sans',sans-serif;color:#bbbbbb;line-height:37px;transform:scaleX(0.88);transform-origin:0 0">m</div>
<div class="vt" id="vr1" style="left:2875px;top:171px;transform:rotate(90deg);color:#bbbbbb">Maven</div>
<svg style="left:2851.3px;top:286px" width="24" height="24" viewBox="0 0 24 24"><circle cx="11.8" cy="11.8" r="11.8" fill="#afb1b3"/><path d="M4 6C7 3.5 11 4.5 11.5 7C12 9.5 9.5 10 8.5 12C7.5 14 9.5 15.5 8 18C6 17 3 13 4 6Z" fill="#3c3f41"/><path d="M13.5 21.5C12 18.5 14 16 16.5 15.5C19 15 20.5 16.5 21.5 15C22 18 18 22 13.5 21.5Z" fill="#3c3f41"/><path d="M15 3.5C17.5 4 20 6 21 9C19 9.5 17.5 8.5 16 8C14.5 7.5 14 5 15 3.5Z" fill="#3c3f41"/></svg>
<div class="vt" id="vr2" style="left:2875px;top:319px;transform:rotate(90deg);color:#bbbbbb">RestfulTool</div>
<svg style="left:2851.3px;top:481px" width="24" height="24" viewBox="0 0 24 24"><g fill="none" stroke="#afb1b3" stroke-width="4.4"><path d="M3.5 1C0.8 6 0.8 18 3.5 23M9.7 1C7 6 7 18 9.7 23M15.9 1C13.2 6 13.2 18 15.9 23"/></g><ellipse cx="20" cy="12" rx="3.6" ry="11.5" fill="#afb1b3"/></svg>
<div class="vt" id="vr3" style="left:2875px;top:515px;transform:rotate(90deg);color:#bbbbbb">Database</div>
<svg style="left:2852px;top:652px" width="22" height="26" viewBox="0 0 22 26"><ellipse cx="11" cy="16.5" rx="4.8" ry="7.5" fill="#afb1b3"/><circle cx="11" cy="6.5" r="3.8" fill="#afb1b3"/><path d="M0.5 3.5L7.5 12M21.5 3.5L14.5 12M0 15.5H7M22 15.5H15M1.5 25.5L7.5 19.5M20.5 25.5L14.5 19.5" stroke="#afb1b3" stroke-width="3"/></svg>
<div class="vt" id="vr4" style="left:2875px;top:685px;transform:rotate(90deg);color:#bbbbbb">Ant</div>
<div class="abs" style="left:0;top:0;width:2880px;height:57px;background:#3c3f41"></div>
<div class="abs" style="left:0;top:56px;width:2880px;height:2px;background:#515151"></div>
<svg style="left:0px;top:0px" width="60" height="58" viewBox="0 0 60 58"><defs><linearGradient id="lgb" x1="0" y1="0" x2="1" y2="1"><stop offset="0" stop-color="#2f7cf0"/><stop offset="0.55" stop-color="#6a55e0"/><stop offset="1" stop-color="#2d83f5"/></linearGradient><linearGradient id="lgp" x1="0" y1="0" x2="0" y2="1"><stop offset="0" stop-color="#fe2857"/><stop offset="1" stop-color="#e8338a"/></linearGradient><linearGradient id="lgv" x1="0" y1="0" x2="1" y2="0"><stop offset="0" stop-color="#b038d8"/><stop offset="1" stop-color="#d636a8"/></linearGradient></defs><path d="M18 12L29 13L33 17V19H20V26L14 24.3Z" fill="url(#lgp)"/><path d="M16.8 25.9L20.5 26V35.5L18.6 34.8L13.7 30.5Z" fill="#fc801d"/><path d="M20 34V38H30L27.5 39.3L16.8 42.9L19.5 35Z" fill="url(#lgv)"/><path d="M36.4 11.9L45.9 19.8L45.7 38.4L33.6 44.1L27.1 39.2L30 38H40V18.3H33L32.8 16.4Z" fill="url(#lgb)"/><rect x="20" y="18.3" width="20" height="19.7" fill="#000"/><rect x="22" y="34" width="8.1" height="1.3" fill="#fff"/><text x="21.6" y="28.9" font-family="Liberation Mono,monospace" font-weight="bold" font-size="12.5" textLength="11.8" lengthAdjust="spacingAndGlyphs" fill="#fff">IJ</text></svg>
<div class="t" id="m_File" style="left:69.60000000000001px;top:9px;font-size:25px"><u>F</u>ile</div>
<div class="t" id="m_Edit" style="left:135.7px;top:9px;font-size:25px"><u>E</u>dit</div>
<div class="t" id="m_View" style="left:207.2px;top:9px;font-size:25px"><u>V</u>iew</div>
<div class="t" id="m_Navigate" style="left:287.4px;top:9px;font-size:25px"><u>N</u>avigate</div>
<div class="t" id="m_Code" style="left:418.0px;top:9px;font-size:25px"><u>C</u>ode</div>
<div class="t" id="m_Analyze" style="left:506.0px;top:9px;font-size:25px">Analy<u>z</u>e</div>
<div class="t" id="m_Refactor" style="left:617.5px;top:9px;font-size:25px"><u>R</u>efactor</div>
<div class="t" id="m_Build" style="left:740.2px;top:9px;font-size:25px"><u>B</u>uild</div>
<div class="t" id="m_Run" style="left:822.2px;top:9px;font-size:25px">R<u>u</u>n</div>
<div class="t" id="m_Tools" style="left:893.2px;top:9px;font-size:25px"><u>T</u>ools</div>
<div class="t" id="m_VCS" style="left:979.2px;top:9px;font-size:25px">VC<u>S</u></div>
<div class="t" id="m_Window" style="left:1049.7px;top:9px;font-size:25px"><u>W</u>indow</div>
<div class="t" id="m_Help" style="left:1165.5px;top:9px;font-size:25px"><u>H</u>elp</div>
<div class="t" id="title" style="left:1279px;top:8px;font-size:25px;color:#8c8c8c">thinking-in-spring</div>
<svg style="left:2638px;top:28px" width="20" height="2.2" viewBox="0 0 20 2.2"><rect width="20" height="2.2" fill="#b8b8b8"/></svg>
<svg style="left:2732px;top:18px" width="20" height="20" viewBox="0 0 20 20"><path d="M1 5H15V19H1Z M5 5V1H19V15H15" fill="none" stroke="#b8b8b8" stroke-width="1.6"/></svg>
<svg style="left:2826px;top:18px" width="20" height="20" viewBox="0 0 20 20"><path d="M0 0L20 20M20 0L0 20" stroke="#b8b8b8" stroke-width="1.8"/></svg>
<div class="abs" style="left:0;top:114px;width:2880px;height:2px;background:#2d2f30"></div>
<div class="t" id="c0" style="left:-1px;top:65px;font-size:25px;font-weight:bold;">.2.RELEASE.jar</div>
<div class="t" id="c1" style="left:204.2px;top:65px;font-size:25px;">org</div>
<div class="t" id="c2" style="left:276.5px;top:65px;font-size:25px;">springframework</div>
<div class="t" id="c3" style="left:502.4px;top:65px;font-size:25px;">beans</div>
<div class="t" id="c4" style="left:603.1px;top:65px;font-size:25px;">factory</div>
<div class="t" id="c5" style="left:714.3px;top:65px;font-size:25px;">annotation</div>
<svg style="left:179.5px;top:70px" width="10" height="30" viewBox="0 0 10 30"><path d="M1 0L9 15L1 30" fill="none" stroke="#5e6366" stroke-width="1.6"/></svg>
<svg style="left:251.5px;top:70px" width="10" height="30" viewBox="0 0 10 30"><path d="M1 0L9 15L1 30" fill="none" stroke="#5e6366" stroke-width="1.6"/></svg>
<svg style="left:477.5px;top:70px" width="10" height="30" viewBox="0 0 10 30"><path d="M1 0L9 15L1 30" fill="none" stroke="#5e6366" stroke-width="1.6"/></svg>
<svg style="left:577.5px;top:70px" width="10" height="30" viewBox="0 0 10 30"><path d="M1 0L9 15L1 30" fill="none" stroke="#5e6366" stroke-width="1.6"/></svg>
<svg style="left:689.5px;top:70px" width="10" height="30" viewBox="0 0 10 30"><path d="M1 0L9 15L1 30" fill="none" stroke="#5e6366" stroke-width="1.6"/></svg>
<svg style="left:847.5px;top:70px" width="10" height="30" viewBox="0 0 10 30"><path d="M1 0L9 15L1 30" fill="none" stroke="#5e6366" stroke-width="1.6"/></svg>
<svg style="left:1386.5px;top:70px" width="10" height="30" viewBox="0 0 10 30"><path d="M1 0L9 15L1 30" fill="none" stroke="#5e6366" stroke-width="1.6"/></svg>
<svg style="left:868px;top:70px" width="28" height="28" viewBox="0 0 28 28"><circle cx="14" cy="14" r="14" fill="#3e86a0"/><path d="M17.4 17.3A4.75 4.75 0 1 1 17.4 10.9" fill="none" stroke="#24414d" stroke-width="2.1"/></svg>
<div class="t" style="left:904.5px;top:65px;font-size:25px"><span id="c6a">InitDestroyAnnotation</span><span id="c6b">BeanPostProcessor</span></div>
<svg style="left:1406px;top:70px" width="28" height="28" viewBox="0 0 28 28"><circle cx="14" cy="14" r="14" fill="#3e86a0"/><path d="M17.4 17.3A4.75 4.75 0 1 1 17.4 10.9" fill="none" stroke="#24414d" stroke-width="2.1"/></svg>
<div class="t" id="c7" style="left:1442.5px;top:65px;font-size:25px">LifecycleMetadata</div>
<svg style="left:1690px;top:70px" width="34" height="32" viewBox="0 0 34 32"><path d="M2 13L13.5 2H20L18 5L6.5 17.3Z" fill="#499c54"/><path d="M10.5 11L14 8L19.5 13.5L18.3 15L32.3 25L27.5 30L14.5 17.5L15.5 16.3Z" fill="#499c54"/></svg>
<div class="abs" style="left:1746px;top:64px;width:366px;height:44px;border:2px solid #5d6062;border-radius:7px;background:#3c3f41"></div>
<svg style="left:1762px;top:71px" width="30" height="28" viewBox="0 0 30 28"><path d="M4 2.7H26.7V21" fill="none" stroke="#4f5b60" stroke-width="2.6"/><rect x="0.2" y="7.3" width="23.8" height="19.6" fill="#566065"/><rect x="2.4" y="11.3" width="19.4" height="13.4" fill="#3c3f41"/><rect x="4" y="13" width="16" height="10" fill="#3c5a66"/></svg>
<div class="t" id="runcfg" style="left:1799.5px;top:67px;font-size:25px">BeanInitializationDemo</div>
<svg style="left:2079px;top:82px" width="17.6" height="9.6" viewBox="0 0 17.6 9.6"><path d="M0 0H17.6L8.8 9.6Z" fill="#9a9da0"/></svg>
<svg style="left:2140px;top:74px" width="20" height="24" viewBox="0 0 20 24"><path d="M0 0V24L20 12Z" fill="#499c54"/></svg>
<svg style="left:2188px;top:72px" width="24" height="28" viewBox="0 0 24 28"><ellipse cx="12" cy="17" rx="7.8" ry="10.8" fill="#499c54"/><path d="M0 12.5H24M0 18.2H24M0 23.8H24" stroke="#499c54" stroke-width="2.8"/><path d="M5.6 1L11.6 7.2M18.4 1L12.4 7.2" stroke="#499c54" stroke-width="2.8" fill="none"/><path d="M8.6 15.4H15.4M8.6 21H15.4" stroke="#3c3f41" stroke-width="2.2"/></svg>
<svg style="left:2237.7px;top:74px" width="30" height="28" viewBox="0 0 30 28"><path d="M0 3L10 0L20 3V13C20 19 15.5 22.5 10 24.5C4.5 22.5 0 19 0 13Z" fill="#afb1b3"/><path d="M11.5 4L17 5.5V13C17 15 16.5 16.5 15.5 18L11.5 18Z" fill="#3c3f41"/><path d="M13.5 6.5V29.5L31.5 18.5Z" fill="#3c3f41"/><path d="M16.3 10V27.8L29.9 18.8Z" fill="#499c54"/></svg>
<svg style="left:2292px;top:72.8px" width="30" height="30" viewBox="0 0 30 30"><circle cx="12" cy="12.2" r="10.6" fill="none" stroke="#afb1b3" stroke-width="3"/><path d="M12.3 5.5V12.5L9 16.5" fill="none" stroke="#afb1b3" stroke-width="2.6"/><path d="M13.5 7.5V30.5L31.5 19.5Z" fill="#3c3f41"/><path d="M16 11.2V29L29.5 20Z" fill="#c75450"/></svg>
<svg style="left:2334px;top:83px" width="16" height="9" viewBox="0 0 16 9"><path d="M0 0H16L8 9Z" fill="#9a9da0"/></svg>
<svg style="left:2376px;top:76px" width="20" height="20" viewBox="0 0 20 20"><rect width="20" height="20" fill="#5a5a5a"/></svg>
<div class="abs" style="left:2418px;top:66px;width:2px;height:40px;background:#555555"></div>
<div class="t" id="gitlbl" style="left:2437.4px;top:65px;font-size:25px">Git:</div>
<svg style="left:2503.6px;top:74px" width="23" height="23" viewBox="0 0 23 23"><path d="M21 2.5L6 17.5" stroke="#3592c4" stroke-width="4.2" fill="none"/><path d="M0.3 8.3V22.4H14.4Z" fill="#3592c4"/></svg>
<svg style="left:2554.2px;top:74.4px" width="27" height="22" viewBox="0 0 27 22"><path d="M1.8 11.8L8.6 18.6L25 1.8" stroke="#499c54" stroke-width="5" fill="none"/></svg>
<svg style="left:2604.2px;top:72px" width="27.4" height="27.4" viewBox="0 0 27.4 27.4"><circle cx="13.7" cy="13.7" r="12.1" fill="none" stroke="#595959" stroke-width="3.2"/><path d="M13.2 6.5V14L19.5 18.2" fill="none" stroke="#595959" stroke-width="3"/></svg>
<svg style="left:2658.4px;top:72.5px" width="26" height="26" viewBox="0 0 26 26"><path d="M7 8.4H16.5A7.6 7.6 0 0 1 16.5 23.6H7.5" fill="none" stroke="#afb1b3" stroke-width="3.6"/><path d="M8.4 0V16.4L0 8.3Z" fill="#afb1b3"/></svg>
<div class="abs" style="left:2702px;top:66px;width:2px;height:40px;background:#555555"></div>
<svg style="left:2722px;top:76px" width="28" height="24" viewBox="0 0 28 24"><path d="M0 0H11.5L14 4H28V8.3H20V16H12.2V20H0Z" fill="#afb1b3"/><rect x="22" y="10.3" width="6" height="6" fill="#3592c4"/><rect x="14.2" y="18" width="6" height="6" fill="#3592c4"/><rect x="22" y="18" width="6" height="6" fill="#3592c4"/></svg>
<div class="abs" style="left:2768px;top:66px;width:2px;height:40px;background:#555555"></div>
<svg style="left:2788px;top:74px" width="28" height="24" viewBox="0 0 28 24"><path d="M0 0H28V24H0Z M2 6V22H26V6Z" fill="#afb1b3" fill-rule="evenodd"/><path d="M5.6 8.3V19.8L15.2 14Z" fill="#499c54"/></svg>
<svg style="left:2840px;top:72px" width="29" height="29" viewBox="0 0 29 29"><circle cx="11.5" cy="11.5" r="9.4" fill="none" stroke="#afb1b3" stroke-width="4.2"/><path d="M18 18L26.5 26.5" stroke="#afb1b3" stroke-width="5"/></svg>
<div class="abs" style="left:0;top:1620px;width:2880px;height:2px;background:#2d2f30"></div>
<div class="abs" style="left:0;top:1622px;width:2880px;height:43px;background:#3c3f41"></div>
<div class="abs" style="left:0;top:1665px;width:2880px;height:1px;background:#4b4d4f"></div>
<div class="abs" style="left:0;top:1666px;width:2880px;height:40px;background:#3c3f41"></div>
<div class="abs" style="left:0;top:1703px;width:2880px;height:3px;background:#999a9b"></div>
<svg style="left:66px;top:1634px" width="22" height="24" viewBox="0 0 22 24"><path d="M2 0V24" stroke="#afb1b3" stroke-width="3.6"/><path d="M2 17H13V8" fill="none" stroke="#afb1b3" stroke-width="3.6"/><path d="M5.5 9L13 0L20.5 9Z" fill="#afb1b3"/></svg>
<div class="t" id="b1" style="left:95.5px;top:1626px;font-size:23px"><u>9</u>: Git</div>
<svg style="left:196px;top:1635px" width="17" height="22" viewBox="0 0 17 22"><path d="M0 0V22L17 11Z" fill="#afb1b3"/></svg>
<div class="t" id="b2" style="left:225px;top:1626px;font-size:23px"><u>4</u>: Run</div>
<svg style="left:338px;top:1636.3px" width="21" height="17" viewBox="0 0 21 17"><g fill="#afb1b3"><rect x="0" y="0" width="4" height="3.8"/><rect x="0" y="6.5" width="4" height="3.8"/><rect x="0" y="13" width="4" height="3.8"/><rect x="6.5" y="0" width="14" height="3.8"/><rect x="6.5" y="6.5" width="14" height="3.8"/><rect x="6.5" y="13" width="14" height="3.8"/></g></svg>
<div class="t" id="b3" style="left:367px;top:1626px;font-size:23px"><u>6</u>: TODO</div>
<svg style="left:506px;top:1636.3px" width="22" height="17" viewBox="0 0 22 17"><g fill="#afb1b3"><rect x="0" y="0" width="22" height="3.8"/><rect x="0" y="6.5" width="13" height="3.8"/><rect x="0" y="13" width="18" height="3.8"/></g></svg>
<div class="t" id="b4" style="left:537.4px;top:1626px;font-size:23px"><u>0</u>: Messages</div>
<svg style="left:708px;top:1633px" width="26" height="24" viewBox="0 0 26 24"><path d="M0 8L8 0L13 2L17 6L13 10L10 7L3 11Z" fill="#afb1b3"/><path d="M11 10L14 7L26 20L22 24Z" fill="#afb1b3"/></svg>
<div class="t" id="b5" style="left:741.3px;top:1626px;font-size:23px">Build</div>
<svg style="left:835px;top:1633px" width="25" height="22" viewBox="0 0 25 22"><path d="M1 17C0 8 8 4 23 0C26 10 22 21 10 20C7 20 4 19 3 18Z" fill="#afb1b3"/><path d="M0 21C6 19 14 14 19 7" fill="none" stroke="#3c3f41" stroke-width="1.6"/></svg>
<div class="t" id="b6" style="left:867.8px;top:1626px;font-size:23px">Spring</div>
<svg style="left:982px;top:1635px" width="22" height="20" viewBox="0 0 22 20"><rect width="22" height="20" fill="#afb1b3"/><path d="M4 5L9 10L4 15" fill="none" stroke="#3c3f41" stroke-width="2.2"/><path d="M11 15H18" stroke="#3c3f41" stroke-width="2.2"/></svg>
<div class="t" id="b7" style="left:1013.5px;top:1626px;font-size:23px">Terminal</div>
<svg style="left:2682px;top:1632px" width="26" height="26" viewBox="0 0 26 26"><circle cx="13" cy="13" r="13" fill="#499c54"/></svg>
<div class="t" style="left:2689px;top:1626px;font-size:21px;color:#fff">1</div>
<div class="t" id="b8" style="left:2716px;top:1626px;font-size:23px">Event Log</div>
<svg style="left:12px;top:1675px" width="24" height="24" viewBox="0 0 24 24"><path d="M1 5V23H19" fill="none" stroke="#afb1b3" stroke-width="2"/><rect x="5" y="1" width="18" height="18" fill="none" stroke="#afb1b3" stroke-width="2"/></svg>
<div class="t" id="s1" style="left:53px;top:1665px">Build completed successfully in 1 s 490 ms (51 minutes ago)</div>
<div class="t" id="s2" style="left:2335.6px;top:1665px">275:19</div>
<div class="t" id="s3" style="left:2434px;top:1665px;color:#8a8d8f">LF</div>
<div class="t" id="s4" style="left:2485px;top:1665px;color:#8a8d8f">UTF-8</div>
<svg style="left:0;top:0" width="2880" height="1706" viewBox="0 0 2880 1706"><polygon points="2231.6,545.9 2107.3,845.9 2103.6,842.8 2104.0,864.0 2118.9,849.0 2114.2,848.7 2232.4,546.1" fill="#fb3437"/><polygon points="2438.8,816.6 2187.1,947.3 2186.3,942.5 2173.0,959.0 2194.1,957.1 2190.6,953.8 2439.2,817.4" fill="#fb3437"/></svg>
<div class="abs" style="left:2562px;top:1652px;width:317px;height:51px;background:#ffffff;border:2px solid #c3cde0;border-radius:4px"></div>
<svg style="left:2516px;top:1640px" width="80" height="70" viewBox="0 0 80 70"><defs><linearGradient id="sg" x1="0" y1="0" x2="0.3" y2="1"><stop offset="0" stop-color="#f8773f"/><stop offset="1" stop-color="#ee4a0e"/></linearGradient></defs><g transform="rotate(-16 40 34)"><rect x="13" y="7" width="54" height="54" rx="8" fill="url(#sg)"/><text x="40" y="55" text-anchor="middle" font-family="Liberation Sans,sans-serif" font-weight="bold" font-style="italic" font-size="60" fill="#fff" transform="translate(40 0) scale(1.12 1) translate(-40 0)">S</text></g></svg>
<div class="t" style="left:2599px;top:1658px;font-size:30px;font-weight:bold;color:#0a6fdc;font-family:'Liberation Sans','Noto Sans CJK SC',sans-serif">中</div>
<svg style="left:2650px;top:1666px" width="30" height="30" viewBox="0 0 30 30"><circle cx="6.2" cy="6.3" r="4" fill="#0a6fdc"/><circle cx="21" cy="14" r="3.6" fill="#0a6fdc"/><path d="M23.5 15C24.5 19 22.5 22.5 19 23.5" fill="none" stroke="#0a6fdc" stroke-width="2.6"/></svg>
<svg style="left:2698px;top:1663px" width="24" height="32" viewBox="0 0 24 32"><rect x="6" y="0" width="12" height="20" rx="6" fill="#0a6fdc"/><path d="M1.5 14A10.5 10.5 0 0 0 22.5 14M12 25V29M6 30H18" fill="none" stroke="#0a6fdc" stroke-width="3"/></svg>
<svg style="left:2745px;top:1667px" width="30" height="23" viewBox="0 0 30 23"><rect x="1.5" y="1.5" width="27" height="20" rx="3.5" fill="none" stroke="#0a6fdc" stroke-width="3"/><path d="M5.5 7.5H24.5M5.5 12H24.5" stroke="#0a6fdc" stroke-width="3" stroke-dasharray="3.4 1.8"/><path d="M8 17H22" stroke="#0a6fdc" stroke-width="3"/></svg>
<svg style="left:2792px;top:1664px" width="30" height="27" viewBox="0 0 30 27"><path d="M0 5L9 0C11 4 19 4 21 0L30 5L26 13L23 11.5V27H7V11.5L4 13Z" fill="#0a6fdc"/></svg>
<svg style="left:2842px;top:1666px" width="26" height="26" viewBox="0 0 26 26"><g fill="#0a6fdc"><rect x="0" y="0" width="11.5" height="11.5" rx="3"/><rect x="0" y="14" width="11.5" height="11.5" rx="3"/><rect x="14" y="14" width="11.5" height="11.5" rx="3"/><rect x="14" y="0" width="11.5" height="11.5" rx="3"/></g><rect x="20" y="2.5" width="3.5" height="3.5" fill="#fff"/></svg>
<div class="t" id="wm" style="left:2654px;top:1668px;font-size:19px;color:rgba(125,125,125,0.92);font-family:'Liberation Sans','Noto Sans CJK SC',sans-serif;text-shadow:0 0 2px #fff,0 0 1px #fff">CSDN @只因为你而温柔</div>
</body></html>
